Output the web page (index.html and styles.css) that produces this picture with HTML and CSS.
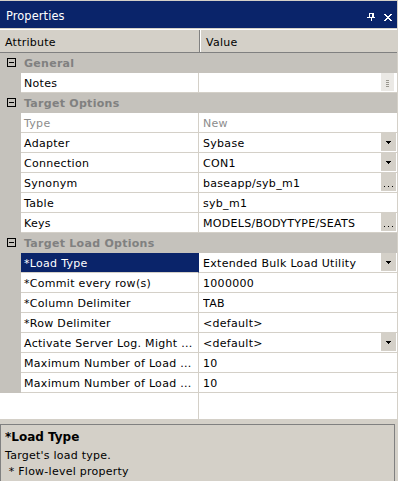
FILE: index.html
```html
<!DOCTYPE html>
<html>
<head>
<meta charset="utf-8">
<link rel="stylesheet" href="styles.css">
</head>
<body>
<div class="window">
  <div class="titlebar">
    <span class="title">Properties</span>
    <span class="tb-icons">
      <svg class="pin" width="8" height="8" viewBox="0 0 8 8" shape-rendering="crispEdges">
        <rect x="2" y="0" width="5" height="1" fill="#fff"/>
        <rect x="2" y="1" width="1" height="3" fill="#fff"/>
        <rect x="5" y="1" width="2" height="3" fill="#fff"/>
        <rect x="0" y="4" width="8" height="1" fill="#fff"/>
        <rect x="4" y="5" width="1" height="3" fill="#fff"/>
      </svg>
      <svg class="close" width="8" height="7" viewBox="0 0 8 7" shape-rendering="crispEdges">
        <rect x="0" y="0" width="2" height="1" fill="#fff"/><rect x="6" y="0" width="2" height="1" fill="#fff"/>
        <rect x="1" y="1" width="2" height="1" fill="#fff"/><rect x="5" y="1" width="2" height="1" fill="#fff"/>
        <rect x="2" y="2" width="4" height="1" fill="#fff"/>
        <rect x="3" y="3" width="2" height="1" fill="#fff"/>
        <rect x="2" y="4" width="4" height="1" fill="#fff"/>
        <rect x="1" y="5" width="2" height="1" fill="#fff"/><rect x="5" y="5" width="2" height="1" fill="#fff"/>
        <rect x="0" y="6" width="2" height="1" fill="#fff"/><rect x="6" y="6" width="2" height="1" fill="#fff"/>
      </svg>
    </span>
  </div>
  <div class="titlegap"></div>
  <div class="header">
    <div class="hcell hattr">Attribute</div>
    <div class="hcell hval">Value</div>
  </div>
  <div class="grid">
    <div class="cat">
      <div class="toggle"><svg width="9" height="9" viewBox="0 0 9 9" shape-rendering="crispEdges"><rect x="0.5" y="0.5" width="8" height="8" fill="none" stroke="#000"/><rect x="2" y="4" width="5" height="1" fill="#000"/></svg></div>
      <div class="catlabel">General</div>
    </div>
    <div class="row">
      <div class="gut"></div><div class="attr">Notes</div>
      <div class="val"><span class="vtext"></span><span class="grip"><i></i><i></i><i></i><i></i></span></div>
    </div>
    <div class="cat">
      <div class="toggle"><svg width="9" height="9" viewBox="0 0 9 9" shape-rendering="crispEdges"><rect x="0.5" y="0.5" width="8" height="8" fill="none" stroke="#000"/><rect x="2" y="4" width="5" height="1" fill="#000"/></svg></div>
      <div class="catlabel">Target Options</div>
    </div>
    <div class="row dim">
      <div class="gut"></div><div class="attr">Type</div><div class="val"><span class="vtext">New</span></div>
    </div>
    <div class="row">
      <div class="gut"></div><div class="attr">Adapter</div>
      <div class="val"><span class="vtext">Sybase</span><span class="btn"><svg width="5" height="3" viewBox="0 0 5 3" shape-rendering="crispEdges"><rect x="0" y="0" width="5" height="1"/><rect x="1" y="1" width="3" height="1"/><rect x="2" y="2" width="1" height="1"/></svg></span></div>
    </div>
    <div class="row">
      <div class="gut"></div><div class="attr">Connection</div>
      <div class="val"><span class="vtext">CON1</span><span class="btn"><svg width="5" height="3" viewBox="0 0 5 3" shape-rendering="crispEdges"><rect x="0" y="0" width="5" height="1"/><rect x="1" y="1" width="3" height="1"/><rect x="2" y="2" width="1" height="1"/></svg></span></div>
    </div>
    <div class="row">
      <div class="gut"></div><div class="attr">Synonym</div>
      <div class="val"><span class="vtext">baseapp/syb_m1</span><span class="btn ell"><svg width="9" height="1" viewBox="0 0 9 1" shape-rendering="crispEdges"><rect x="0" y="0" width="1" height="1"/><rect x="4" y="0" width="1" height="1"/><rect x="8" y="0" width="1" height="1"/></svg></span></div>
    </div>
    <div class="row">
      <div class="gut"></div><div class="attr">Table</div><div class="val"><span class="vtext">syb_m1</span></div>
    </div>
    <div class="row">
      <div class="gut"></div><div class="attr">Keys</div>
      <div class="val"><span class="vtext">MODELS/BODYTYPE/SEATS</span><span class="btn ell"><svg width="9" height="1" viewBox="0 0 9 1" shape-rendering="crispEdges"><rect x="0" y="0" width="1" height="1"/><rect x="4" y="0" width="1" height="1"/><rect x="8" y="0" width="1" height="1"/></svg></span></div>
    </div>
    <div class="cat">
      <div class="toggle"><svg width="9" height="9" viewBox="0 0 9 9" shape-rendering="crispEdges"><rect x="0.5" y="0.5" width="8" height="8" fill="none" stroke="#000"/><rect x="2" y="4" width="5" height="1" fill="#000"/></svg></div>
      <div class="catlabel">Target Load Options</div>
    </div>
    <div class="row sel">
      <div class="gut"></div><div class="attr">*Load Type</div>
      <div class="val"><span class="vtext">Extended Bulk Load Utility</span><span class="btn"><svg width="5" height="3" viewBox="0 0 5 3" shape-rendering="crispEdges"><rect x="0" y="0" width="5" height="1"/><rect x="1" y="1" width="3" height="1"/><rect x="2" y="2" width="1" height="1"/></svg></span></div>
    </div>
    <div class="row">
      <div class="gut"></div><div class="attr">*Commit every row(s)</div><div class="val"><span class="vtext">1000000</span></div>
    </div>
    <div class="row">
      <div class="gut"></div><div class="attr">*Column Delimiter</div><div class="val"><span class="vtext">TAB</span></div>
    </div>
    <div class="row">
      <div class="gut"></div><div class="attr">*Row Delimiter</div><div class="val"><span class="vtext">&lt;default&gt;</span></div>
    </div>
    <div class="row">
      <div class="gut"></div><div class="attr">Activate Server Log. Might ...</div>
      <div class="val"><span class="vtext">&lt;default&gt;</span><span class="btn"><svg width="5" height="3" viewBox="0 0 5 3" shape-rendering="crispEdges"><rect x="0" y="0" width="5" height="1"/><rect x="1" y="1" width="3" height="1"/><rect x="2" y="2" width="1" height="1"/></svg></span></div>
    </div>
    <div class="row">
      <div class="gut"></div><div class="attr">Maximum Number of Load ...</div><div class="val"><span class="vtext">10</span></div>
    </div>
    <div class="row">
      <div class="gut"></div><div class="attr">Maximum Number of Load ...</div><div class="val"><span class="vtext">10</span></div>
    </div>
    <div class="filler">
      <div class="fattr"></div><div class="fval"></div>
    </div>
  </div>
  <div class="splitter"></div>
  <div class="desc">
    <div class="desc-title">*Load Type</div>
    <div class="desc-line">Target's load type.</div>
    <div class="desc-line pre"> * Flow-level property</div>
  </div>
</div>
</body>
</html>
```
FILE: styles.css
```css
html, body {
  margin: 0;
  padding: 0;
  background: #d4d0c8;
}

.window {
  width: 398px;
  height: 481px;
  overflow: hidden;
  background: #d4d0c8;
  font-family: "DejaVu Sans", sans-serif;
  font-size: 11px;
  color: #000;
}

.titlebar {
  margin-top: 1px;
  margin-right: 1px;
  height: 27px;
  background: #0a246a;
  color: #fff;
  display: flex;
  align-items: flex-start;
  justify-content: space-between;
}

.title {
  padding-left: 6px;
  padding-top: 3px;
  line-height: 24px;
  font-size: 11.4px;
  letter-spacing: 0.1px;
}

.tb-icons {
  display: flex;
  align-items: flex-start;
  padding-top: 12px;
  padding-right: 5px;
  gap: 9px;
}

.tb-icons .close {
  margin-top: 1px;
}

.titlegap {
  height: 1px;
}

.header {
  display: flex;
  height: 22px;
  border-top: 1px solid #ffffff;
  border-bottom: 1px solid #808080;
  margin-right: 1px;
  background: #d4d0c8;
  overflow: hidden;
}

.hcell {
  padding-top: 3px;
  line-height: 19px;
  letter-spacing: 0.25px;
}

.hattr {
  width: 200px;
  box-sizing: border-box;
  padding-left: 5px;
  border-right: 1px solid #808080;
}

.hval {
  flex: 1;
  padding-left: 5px;
  border-left: 1px solid #ffffff;
}

.grid {
  width: 397px;
}

.cat {
  display: flex;
  height: 20px;
  background: #c5c2bc;
  overflow: hidden;
}

.toggle {
  width: 21px;
  flex: none;
  display: flex;
  align-items: flex-start;
  padding-left: 7px;
  padding-top: 5px;
  box-sizing: border-box;
}

.toggle svg {
  display: block;
}

.catlabel {
  padding-left: 3px;
  padding-top: 2px;
  line-height: 18px;
  font-weight: bold;
  color: #808080;
  letter-spacing: 0.28px;
}

.row {
  display: grid;
  grid-template-columns: 21px 178px 1fr;
  height: 20px;
}

.gut {
  background: #c5c2bc;
}

.attr, .val {
  background: #ffffff;
  border-bottom: 1px solid #d4d0c8;
  line-height: 18px;
  letter-spacing: 0.3px;
  white-space: nowrap;
  overflow: hidden;
}

.attr {
  padding-top: 2px;
  padding-left: 3px;
  border-right: 1px solid #d4d0c8;
}

.attr, .vtext {
  padding-top: 2px;
}

.attr {
  height: 17px;
}

.val {
  display: flex;
  align-items: flex-start;
  padding-left: 4px;
  padding-right: 1px;
  height: 19px;
}

.vtext {
  flex: 1;
  height: 17px;
  overflow: hidden;
}

.dim .attr, .dim .val {
  color: #8c8c8c;
}

.sel .attr {
  background: #0a246a;
  color: #ffffff;
  border-right-color: #0a246a;
}

.btn {
  width: 15px;
  height: 18px;
  flex: none;
  background: #d4d0c8;
  display: flex;
  align-items: center;
  justify-content: center;
}

.btn svg {
  display: block;
  fill: #000;
}

.btn.ell {
  align-items: flex-end;
  padding-bottom: 4px;
  box-sizing: border-box;
}

.grip {
  width: 13px;
  height: 18px;
  flex: none;
  margin-right: 2px;
  background: #ebe9e5;
  display: flex;
  flex-direction: column;
  align-items: center;
  padding-top: 7px;
  box-sizing: border-box;
  gap: 1px;
}

.grip i {
  display: block;
  width: 3px;
  height: 1px;
  background: #9a978f;
}

.filler {
  display: flex;
  height: 26px;
  background: #ffffff;
}

.fattr {
  width: 199px;
  box-sizing: border-box;
  border-right: 1px solid #d4d0c8;
}

.fval {
  flex: 1;
}

.splitter {
  height: 5px;
}

.desc {
  width: 395px;
  box-sizing: border-box;
  height: 57px;
  border-top: 1px solid #808080;
  border-left: 1px solid #808080;
  border-right: 1px solid #808080;
  padding-left: 4px;
  padding-top: 4px;
}

.desc-title {
  font-weight: bold;
  font-size: 12px;
  line-height: 16px;
  margin-bottom: 3px;
}

.desc-line {
  line-height: 16px;
  letter-spacing: 0.25px;
}

.pre {
  white-space: pre;
}
```
